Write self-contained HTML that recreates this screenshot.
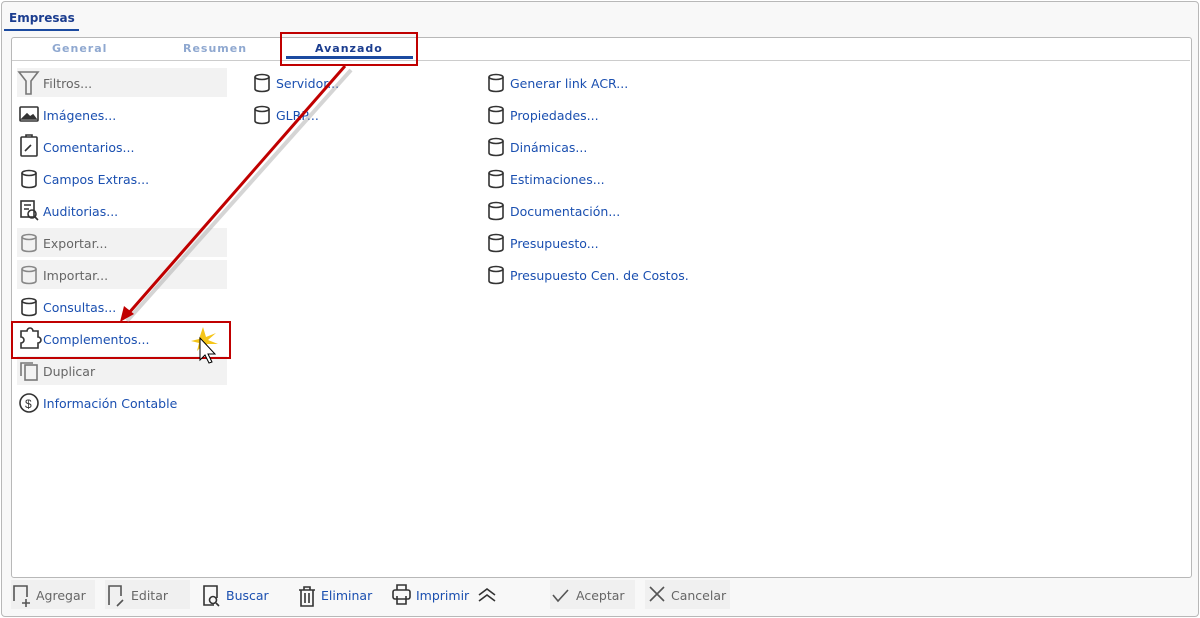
<!DOCTYPE html><html><head><meta charset="utf-8"><style>
body{margin:0;width:1200px;height:618px;background:#fff;font-family:"DejaVu Sans",sans-serif;position:relative;overflow:hidden}
.outer{position:absolute;left:1px;top:1px;width:1196px;height:614px;border:1px solid #b8b8b8;border-radius:4px;background:#f8f8f8}
.inner{position:absolute;left:11px;top:37px;width:1179px;height:539px;border:1px solid #b8b8b8;border-radius:3px;background:#fff}
.t{position:absolute;font-size:12.5px;color:#1a4fb0;white-space:nowrap;margin-top:1px}
.g{color:#666}
.bg{position:absolute;left:17px;width:210px;height:29px;background:#f2f2f2}
.tab{position:absolute;top:42px;font-size:11px;font-weight:bold;letter-spacing:1px;color:#8fa8d0}
.btn{position:absolute;top:580px;height:29px;background:#f0f0f0}
</style></head><body>
<div class="outer"></div>
<div class="t" style="left:9px;top:10px;font-size:12px;font-weight:bold;color:#1b3d8f">Empresas</div>
<div style="position:absolute;left:4px;top:29px;width:75px;height:2px;background:#1b4aa0"></div>
<div class="inner"></div>
<div style="position:absolute;left:12px;top:60px;width:1178px;height:1px;background:#ccc"></div>
<div class="tab" style="left:52px">General</div>
<div class="tab" style="left:183px">Resumen</div>
<div class="tab" style="left:315px;color:#1b3d8f">Avanzado</div>
<div style="position:absolute;left:286px;top:56px;width:127px;height:3px;background:#1b4aa0"></div>

<div class="bg" style="top:68px"></div><div class="bg" style="top:228px"></div><div class="bg" style="top:260px"></div><div class="bg" style="top:356px"></div>
<div class="btn" style="left:11px;width:84px"></div>
<div class="btn" style="left:105px;width:85px"></div>
<div class="btn" style="left:550px;width:85px"></div>
<div class="btn" style="left:645px;width:85px"></div>

<svg width="1200" height="618" style="position:absolute;left:0;top:0" fill="none" stroke="#333" stroke-width="1.6">
<defs><g id="db"><ellipse cx="8" cy="3" rx="7" ry="2.5"/><path d="M1 3v12c0 1.5 3 2.5 7 2.5s7-1 7-2.5V3"/></g></defs>
<path d="M19 72h19l-7 9v13h-5V81z" stroke="#777"/>
<rect x="20" y="107" width="18" height="14" rx="1"/><path d="M22 119l5-5 3 3 3-2 3 4z" fill="#333"/>
<rect x="21" y="137" width="16" height="19" rx="1"/><path d="M26 137v-2h6v2M25 151l6-6"/>
<use href="#db" x="21" y="170"/>
<rect x="21" y="201" width="13" height="16"/><circle cx="32" cy="214" r="4"/><path d="M35 217l3 3M24 205h7M24 209h5"/>
<use href="#db" x="21" y="234" stroke="#888"/>
<use href="#db" x="21" y="266" stroke="#888"/>
<use href="#db" x="21" y="298"/>
<path d="M21 331h6a3 3 0 016 0h5v6a3 3 0 010 6v5H21v-5a3 3 0 000-6z"/>
<rect x="25" y="365" width="12" height="15" stroke="#777"/><path d="M21 376v-13h12" stroke="#777"/>
<circle cx="29" cy="403" r="9"/><text x="25" y="408" font-size="12" fill="#333" stroke="none" font-family="Liberation Sans">$</text>
<use href="#db" x="254" y="74"/><use href="#db" x="254" y="106"/>
<use href="#db" x="488" y="74"/><use href="#db" x="488" y="106"/><use href="#db" x="488" y="138"/><use href="#db" x="488" y="170"/><use href="#db" x="488" y="202"/><use href="#db" x="488" y="234"/><use href="#db" x="488" y="266"/>
<path d="M14 601v-15h13v11M26 599v8M22 603h8" stroke="#555"/>
<path d="M109 605v-19h12v10M117 606l6-6" stroke="#555"/>
<path d="M214 605h-10v-19h13v12"/><circle cx="213" cy="600" r="3.5"/><path d="M216 603l3 3"/>
<path d="M299 590h16M304 590v-3h6v3M301 590v16h12V590M305 593v10M309 593v10"/>
<rect x="393" y="590" width="17" height="9" rx="2"/><path d="M397 590v-5h9v5M397 596v8h9v-8"/>
<path d="M479 595l8-6 8 6M479 601l8-6 8 6"/>
<path d="M553 595l5 6 10-11" stroke="#555"/>
<path d="M650 587l14 14M664 587l-14 14" stroke="#555"/>
</svg>

<div class="t g" style="left:43px;top:75px">Filtros...</div>
<div class="t" style="left:43px;top:107px">Imágenes...</div>
<div class="t" style="left:43px;top:139px">Comentarios...</div>
<div class="t" style="left:43px;top:171px">Campos Extras...</div>
<div class="t" style="left:43px;top:203px">Auditorias...</div>
<div class="t g" style="left:43px;top:235px">Exportar...</div>
<div class="t g" style="left:43px;top:267px">Importar...</div>
<div class="t" style="left:43px;top:299px">Consultas...</div>
<div class="t" style="left:43px;top:331px">Complementos...</div>
<div class="t g" style="left:43px;top:363px">Duplicar</div>
<div class="t" style="left:43px;top:395px">Información Contable</div>
<div class="t" style="left:276px;top:75px">Servidor...</div>
<div class="t" style="left:276px;top:107px">GLRP...</div>
<div class="t" style="left:510px;top:75px">Generar link ACR...</div>
<div class="t" style="left:510px;top:107px">Propiedades...</div>
<div class="t" style="left:510px;top:139px">Dinámicas...</div>
<div class="t" style="left:510px;top:171px">Estimaciones...</div>
<div class="t" style="left:510px;top:203px">Documentación...</div>
<div class="t" style="left:510px;top:235px">Presupuesto...</div>
<div class="t" style="left:510px;top:267px">Presupuesto Cen. de Costos.</div>

<div class="t g" style="left:36px;top:587px">Agregar</div>
<div class="t g" style="left:131px;top:587px">Editar</div>
<div class="t" style="left:226px;top:587px">Buscar</div>
<div class="t" style="left:321px;top:587px">Eliminar</div>
<div class="t" style="left:416px;top:587px">Imprimir</div>
<div class="t g" style="left:576px;top:587px">Aceptar</div>
<div class="t g" style="left:671px;top:587px">Cancelar</div>

<svg width="1200" height="618" style="position:absolute;left:0;top:0">
<rect x="281" y="33" width="136" height="32" fill="none" stroke="#c00000" stroke-width="2"/>
<rect x="12" y="322" width="218" height="36" fill="none" stroke="#c00000" stroke-width="2"/>
<line x1="348" y1="67" x2="124" y2="318" stroke="#999" stroke-width="4" opacity=".4" transform="translate(3,3)"/>
<line x1="345" y1="66" x2="128" y2="314" stroke="#c00000" stroke-width="3"/>
<path d="M120 322l4-16 10 8z" fill="#c00000"/>
<path d="M203 327l3 10 10-4-8 7 10 4-11 0 2 8-6-7-6 6 2-8-8-2 8-2z" fill="#f5c518"/>
<path d="M200 338v22l5-5 4 8 3-1-4-8h7z" fill="#fff" stroke="#000"/>
</svg>
</body></html>
